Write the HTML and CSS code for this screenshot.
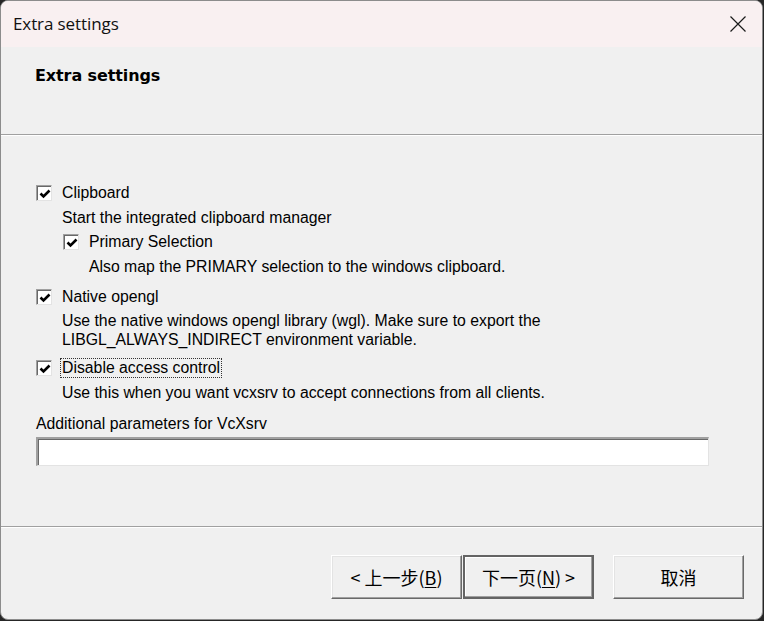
FILE: index.html
```html
<!DOCTYPE html>
<html>
<head>
<meta charset="utf-8">
<link rel="stylesheet" href="styles.css">
</head>
<body>
<div class="window">
  <div class="titlebar">
    <span class="title">Extra settings</span>
    <svg class="close" width="16" height="16" viewBox="0 0 16 16"><path d="M0.5 0.5 L15.5 15.5 M15.5 0.5 L0.5 15.5" stroke="#1a1a1a" stroke-width="1.2" fill="none"/></svg>
  </div>
  <div class="header">
    <div class="heading">Extra settings</div>
  </div>
  <div class="content">
    <div class="option">
      <div class="row"><span class="check"><svg width="12" height="12" viewBox="0 0 12 12"><path d="M1.5 5.5 L4.5 8.5 L10.5 2.5" stroke="#000" stroke-width="2.6" fill="none"/></svg></span><span class="label">Clipboard</span></div>
      <div class="desc d1">Start the integrated clipboard manager</div>
      <div class="option sub">
        <div class="row"><span class="check"><svg width="12" height="12" viewBox="0 0 12 12"><path d="M1.5 5.5 L4.5 8.5 L10.5 2.5" stroke="#000" stroke-width="2.6" fill="none"/></svg></span><span class="label">Primary Selection</span></div>
        <div class="desc d1">Also map the PRIMARY selection to the windows clipboard.</div>
      </div>
    </div>
    <div class="option o2">
      <div class="row"><span class="check"><svg width="12" height="12" viewBox="0 0 12 12"><path d="M1.5 5.5 L4.5 8.5 L10.5 2.5" stroke="#000" stroke-width="2.6" fill="none"/></svg></span><span class="label">Native opengl</span></div>
      <div class="desc d3">Use the native windows opengl library (wgl). Make sure to export the<br>LIBGL_ALWAYS_INDIRECT environment variable.</div>
    </div>
    <div class="option o3">
      <div class="row"><span class="check"><svg width="12" height="12" viewBox="0 0 12 12"><path d="M1.5 5.5 L4.5 8.5 L10.5 2.5" stroke="#000" stroke-width="2.6" fill="none"/></svg></span><span class="label focus">Disable access control</span></div>
      <div class="desc d1">Use this when you want vcxsrv to accept connections from all clients.</div>
    </div>
    <div class="param-label">Additional parameters for VcXsrv</div>
    <div class="input"></div>
  </div>
  <div class="footer">
    <div class="btn-group">
      <button class="btn">&lt; 上一步(<u>B</u>)</button>
      <button class="btn default">下一页(<u>N</u>) &gt;</button>
    </div>
    <button class="btn cancel">取消</button>
  </div>
</div>
</body>
</html>
```

FILE: styles.css
```css
html, body {
  margin: 0;
  padding: 0;
  background: #262626;
  width: 764px;
  height: 621px;
  overflow: hidden;
}
.window {
  width: 761px;
  height: 618px;
  border: 1px solid #8c8c8c;
  border-radius: 8px;
  background: #f0f0f0;
  overflow: hidden;
  display: flex;
  flex-direction: column;
  font-family: "Liberation Sans", Arial, "Noto Sans CJK SC", sans-serif;
  color: #000;
}
.titlebar {
  height: 46px;
  flex: none;
  background: #f9f0f1;
  display: flex;
  align-items: center;
  justify-content: space-between;
  padding: 0 16px 0 12px;
}
.title {
  font-family: "Open Sans", "Noto Sans", sans-serif;
  font-size: 17px;
  letter-spacing: -0.1px;
  color: #111;
  margin-top: -1px;
}
.header {
  height: 88px;
  flex: none;
  border-bottom: 1px solid #a0a0a0;
  box-shadow: 0 1px 0 #ffffff;
  box-sizing: border-box;
  padding: 19px 0 0 34px;
}
.heading {
  font-family: "DejaVu Sans", Verdana, sans-serif;
  font-weight: bold;
  font-size: 16px;
  line-height: 20px;
  letter-spacing: -0.1px;
}
.content {
  flex: 1;
  padding: 48px 0 0 35px;
  font-size: 15.8px;
  border-bottom: 1px solid #a0a0a0;
  box-sizing: border-box;
}
.row {
  display: flex;
  align-items: center;
  height: 20px;
}
.check {
  width: 16px;
  height: 16px;
  box-sizing: border-box;
  background: #fff;
  border-top: 1px solid #a0a0a0;
  border-left: 1px solid #a0a0a0;
  border-right: 1px solid #e3e3e3;
  border-bottom: 1px solid #e3e3e3;
  box-shadow: inset 1px 1px 0 #696969;
  display: flex;
  align-items: center;
  justify-content: center;
  margin-right: 10px;
  flex: none;
}
.check svg {
  display: block;
  margin: 1px 0 0 1px;
}
.label {
  line-height: 18px;
}
.focus {
  outline: 1px dotted #333;
  outline-offset: 0px;
  padding: 0 1px;
  margin-left: -1px;
}
.desc {
  padding-left: 26px;
  line-height: 19px;
}
.d1 { margin-top: 5px; }
.d3 { margin-top: 4px; }
.sub {
  margin-top: 5px;
  padding-left: 27px;
}
.o2 { margin-top: 11px; }
.o3 { margin-top: 9px; }
.param-label {
  margin-top: 12px;
  line-height: 19px;
}
.input {
  margin-top: 4px;
  width: 673px;
  height: 29px;
  box-sizing: border-box;
  background: #fff;
  border-top: 2px solid #a0a0a0;
  border-left: 2px solid #a0a0a0;
  border-right: 1px solid #e3e3e3;
  border-bottom: 1px solid #e3e3e3;
  box-shadow: inset 1px 1px 0 #696969;
}
.footer {
  height: 92px;
  flex: none;
  box-shadow: inset 0 1px 0 #fff;
  display: flex;
  align-items: flex-start;
  padding: 28px 0 0 330px;
  box-sizing: border-box;
  gap: 19px;
}
.btn-group {
  display: flex;
  gap: 1px;
}
.btn {
  width: 131px;
  height: 44px;
  box-sizing: border-box;
  background: #f0f0f0;
  font-family: "Noto Sans CJK SC", "Liberation Sans", sans-serif;
  font-size: 18px;
  color: #000;
  border-top: 1px solid #fff;
  border-left: 1px solid #fff;
  border-right: 1px solid #696969;
  border-bottom: 1px solid #696969;
  box-shadow: inset -1px -1px 0 #a0a0a0, inset 1px 1px 0 #e3e3e3;
  padding: 0;
  margin: 0;
}
.btn u {
  text-underline-offset: 2px;
}
.default {
  border: 2px solid #646464;
  box-shadow: inset -1px -1px 0 #a0a0a0, inset 1px 1px 0 #fff;
}
```
